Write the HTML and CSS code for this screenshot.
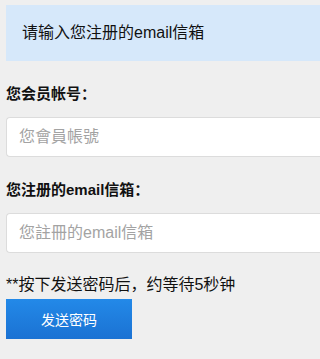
FILE: index.html
```html
<!DOCTYPE html>
<html lang="zh">
<head>
<meta charset="utf-8">
<title>发送密码</title>
<link rel="stylesheet" href="styles.css">
</head>
<body>
<div class="page">
  <div class="notice">请输入您注册的email信箱</div>
  <label class="label" for="acct">您会员帐号<span class="colon">：</span></label>
  <input class="field" id="acct" type="text" placeholder="您會員帳號">
  <label class="label" for="mail">您注册的email信箱<span class="colon">：</span></label>
  <input class="field" id="mail" type="text" placeholder="您註冊的email信箱">
  <p class="note">**按下发送密码后，约等待5秒钟</p>
  <button class="send" type="button">发送密码</button>
</div>
</body>
</html>
```

FILE: styles.css
```css
html, body {
  margin: 0;
  padding: 0;
  background: #efefef;
  overflow: hidden;
}
body {
  font-family: "Liberation Sans", "Noto Sans CJK SC", sans-serif;
  color: #111;
}
.page {
  box-sizing: border-box;
  width: 100%;
  padding: 5px 0 0 6px;
  display: flex;
  flex-direction: column;
  align-items: flex-start;
}
.notice {
  box-sizing: border-box;
  width: 100%;
  height: 56px;
  background: #d6e8fa;
  display: flex;
  align-items: center;
  padding: 0 16px;
  font-size: 16px;
  line-height: 20px;
  white-space: nowrap;
}
.label {
  display: block;
  height: 20px;
  font-size: 15px;
  font-weight: bold;
  line-height: 20px;
  margin-top: 23px;
  white-space: nowrap;
}
.colon {
  font-family: "Noto Sans CJK JP", sans-serif;
  line-height: 0;
}
.field {
  box-sizing: border-box;
  display: block;
  width: 100%;
  height: 40px;
  margin: 13px 0 0 0;
  padding: 0 12px;
  border: 1px solid #dcdcdc;
  border-right: 0;
  border-radius: 4px 0 0 4px;
  background: #fff;
  font-family: "Liberation Sans", "Noto Sans CJK SC", sans-serif;
  font-size: 16px;
  color: #333;
  outline: none;
}
.field::placeholder {
  color: #a3a3a3;
}
.note {
  margin: 22px 0 0 0;
  font-size: 16px;
  line-height: 20px;
  white-space: nowrap;
}
.send {
  margin-top: 4px;
  width: 126px;
  height: 40px;
  border: 0;
  border-radius: 0;
  background: linear-gradient(#2389e8, #1b72d3);
  color: #fff;
  font-family: "Liberation Sans", "Noto Sans CJK SC", sans-serif;
  font-size: 14px;
  padding: 0;
}
```
